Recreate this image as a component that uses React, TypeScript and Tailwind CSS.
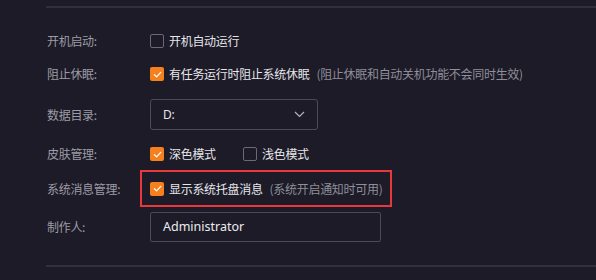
import { ReactNode } from "react";

const cjk = { fontFamily: '"Noto Sans CJK SC", "Noto Sans", sans-serif' };

function Check({ checked }: { checked?: boolean }) {
  if (checked) {
    return (
      <span className="flex h-[14px] w-[14px] shrink-0 items-center justify-center rounded-[2px] bg-[#f7801e]">
        <svg width="9" height="9" viewBox="0 0 10 10" fill="none">
          <path d="M1.5 5.2 4 7.6 8.6 2.6" stroke="#fff" strokeWidth="1.4" strokeLinecap="round" strokeLinejoin="round" />
        </svg>
      </span>
    );
  }
  return <span className="h-[14px] w-[14px] shrink-0 rounded-[2px] border border-[#6a6975]" />;
}

function Row({ label, className, children }: { label: string; className: string; children: ReactNode }) {
  return (
    <div className={`relative flex items-center ${className}`}>
      <div className="w-[103px] shrink-0 text-[#9d9ca6]">{label}</div>
      {children}
    </div>
  );
}

export default function App() {
  return (
    <div
      className="h-[280px] w-[596px] overflow-hidden bg-[#1c1b27] pt-[6px] text-[12px] tracking-[-0.3px]"
      style={cjk}
    >
      <div className="ml-[46px] h-[2px] bg-[#302f3b]" />
      <div className="pl-[47px]">
        <Row label="开机启动:" className="mt-[20px] h-[26px]">
          <Check />
          <span className="ml-[5px] text-[#e6e6ea]">开机自动运行</span>
        </Row>

        <Row label="阻止休眠:" className="mt-[7px] h-[26px]">
          <Check checked />
          <span className="ml-[5px] text-[#e6e6ea]">有任务运行时阻止系统休眠</span>
          <span className="ml-[7px] text-[#8f8e99]">(阻止休眠和自动关机功能不会同时生效)</span>
        </Row>

        <Row label="数据目录:" className="mt-[12px] h-[31px]">
          <div className="flex h-[31px] w-[168px] items-center justify-between rounded-[3px] border border-[#4b4a56] pl-[12px] pr-[12px]">
            <span className="text-[#e6e6ea]" style={{ fontFamily: '"Noto Sans", sans-serif' }}>D:</span>
            <svg width="11" height="7" viewBox="0 0 11 7" fill="none">
              <path d="M1 1l4.5 4.5L10 1" stroke="#b4b3bd" strokeWidth="1.2" />
            </svg>
          </div>
        </Row>

        <Row label="皮肤管理:" className="mt-[11px] h-[26px]">
          <Check checked />
          <span className="ml-[5px] w-[74px] text-[#e6e6ea]">深色模式</span>
          <Check />
          <span className="ml-[5px] text-[#e6e6ea]">浅色模式</span>
        </Row>

        <Row label="系统消息管理:" className="mt-[3px] h-[37px]">
          <Check checked />
          <span className="ml-[5px] text-[#e6e6ea]">显示系统托盘消息</span>
          <span className="ml-[7px] text-[#8f8e99]">(系统开启通知时可用)</span>
          <div className="pointer-events-none absolute left-[93px] top-0 h-[37px] w-[252px] border-2 border-[#e8383b]" />
        </Row>

        <Row label="制作人:" className="mt-[5px] h-[30px]">
          <div
            className="flex h-[30px] w-[231px] items-center rounded-[2px] border border-[#4b4a56] pl-[12px] text-[12.5px] tracking-normal text-[#ececf0]"
            style={{ fontFamily: '"Noto Sans", sans-serif' }}
          >
            Administrator
          </div>
        </Row>
      </div>
      <div className="ml-[46px] mt-[23px] h-[2px] bg-[#302f3b]" />
    </div>
  );
}
